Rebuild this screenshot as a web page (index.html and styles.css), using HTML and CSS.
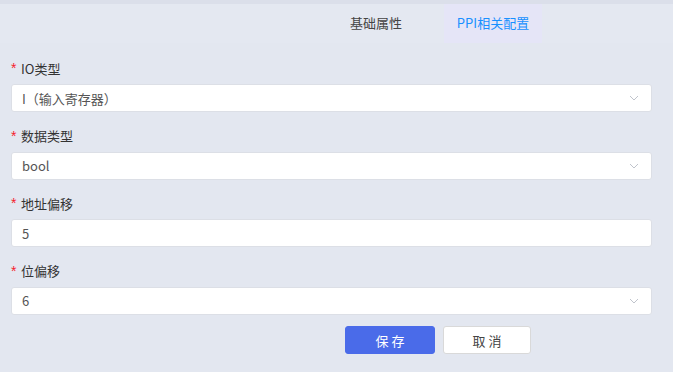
FILE: index.html
```html
<!DOCTYPE html>
<html lang="zh-CN">
<head>
    <meta charset="UTF-8">
    <meta name="viewport" content="width=device-width, initial-scale=1.0">
    <title>PPI相关配置</title>
    <link rel="stylesheet" href="styles.css">
</head>
<body>
    <div class="top-strip"></div>

    <!-- tabs -->
    <div class="tabs">
        <div class="tab">基础属性</div>
        <div class="tab active">PPI相关配置</div>
    </div>

    <form class="form">
        <div class="field">
            <label class="label"><span class="req">*</span>IO类型</label>
            <div class="select">
                <span>I（输入寄存器）</span>
                <svg class="arrow" width="10" height="6" viewBox="0 0 10 6"><path d="M1 1l4 4 4-4" fill="none" stroke="#c0c4cc" stroke-width="1"/></svg>
            </div>
        </div>
        <div class="field">
            <label class="label"><span class="req">*</span>数据类型</label>
            <div class="select">
                <span>bool</span>
                <svg class="arrow" width="10" height="6" viewBox="0 0 10 6"><path d="M1 1l4 4 4-4" fill="none" stroke="#c0c4cc" stroke-width="1"/></svg>
            </div>
        </div>
        <div class="field">
            <label class="label"><span class="req">*</span>地址偏移</label>
            <div class="select">
                <span>5</span>
            </div>
        </div>
        <div class="field">
            <label class="label"><span class="req">*</span>位偏移</label>
            <div class="select">
                <span>6</span>
                <svg class="arrow" width="10" height="6" viewBox="0 0 10 6"><path d="M1 1l4 4 4-4" fill="none" stroke="#c0c4cc" stroke-width="1"/></svg>
            </div>
        </div>

        <div class="actions">
            <button type="button" class="btn primary">保 存</button>
            <button type="button" class="btn">取 消</button>
        </div>
    </form>
</body>
</html>
```

FILE: styles.css
```css
body {
    margin: 0;
    background: #e3e7f0;
    font-family: "Noto Sans CJK SC", "Noto Sans", sans-serif;
    font-size: 13px;
    color: #333;
}

.top-strip {
    height: 4px;
    background: #dbdfea;
}

/* tabs */
.tabs {
    display: flex;
    gap: 19px;
    height: 39px;
    padding-left: 327px;
    background: #e4e8f1;
}
.tab {
    width: 98px;
    line-height: 37px;
    text-align: center;
    color: #444;
}
.tab.active {
    background: #e5e5f7;
    color: #1890ff;
}

/* form */
.form {
    padding: 13px 21px 0 11px;
}
.field {
    margin-bottom: 11.5px;
}
.label {
    display: flex;
    align-items: center;
    height: 24px;
    margin-bottom: 4px;
    color: #333;
}
.req {
    color: #f5222d;
    width: 10px;
    font-family: "Liberation Sans", sans-serif;
    font-size: 14px;
}
.select {
    display: flex;
    align-items: center;
    justify-content: space-between;
    height: 26px;
    padding: 0 12px 0 10px;
    background: #fff;
    border: 1px solid #dcdfe6;
    border-radius: 3px;
    color: #555;
}
.arrow {
    display: block;
}

.actions {
    display: flex;
    gap: 8px;
    padding-left: 334px;
    margin-top: 3.5px;
}
.btn {
    width: 88px;
    height: 28px;
    border: 1px solid #d9d9d9;
    border-radius: 3px;
    background: #fff;
    font-family: inherit;
    font-size: 13px;
    color: #444;
}
.btn.primary {
    width: 90px;
    background: #4a6be9;
    border-color: #4a6be9;
    color: #fff;
}
```
